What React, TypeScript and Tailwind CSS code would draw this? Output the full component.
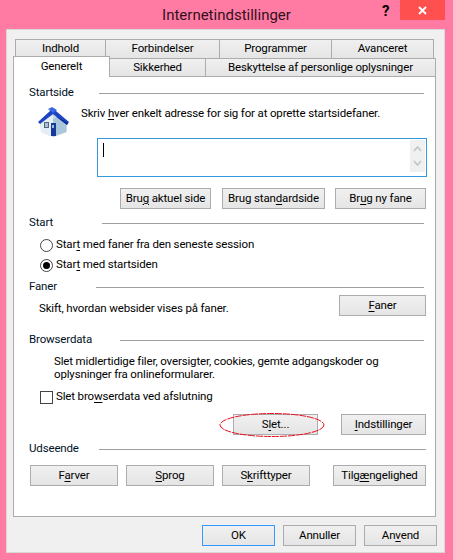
import type { ReactNode } from 'react';

const font = 'font-["Roboto","Open_Sans",sans-serif]';

function Key({ children }: { children: ReactNode }) {
  return <span className="underline underline-offset-2">{children}</span>;
}

function Btn({ className = '', children }: { className?: string; children: ReactNode }) {
  return (
    <div
      className={`h-[21px] flex items-center justify-center border border-[#acacac] bg-gradient-to-b from-[#f0f0f0] to-[#e5e5e5] text-[11.5px] tracking-[-0.15px] leading-none text-black ${className}`}
    >
      <span className="whitespace-pre">{children}</span>
    </div>
  );
}

function Heading({ label, labelClass, className = '' }: { label: string; labelClass: string; className?: string }) {
  return (
    <div className={`flex items-center h-[16px] ${className}`}>
      <span className={`text-[11.5px] tracking-[-0.15px] text-[#00111f] leading-none ${labelClass}`}>{label}</span>
      <div className="flex-1 h-px bg-[#a0a0a0]" />
    </div>
  );
}

function Tab({ className = '', children }: { className?: string; children: ReactNode }) {
  return (
    <div
      className={`flex items-center justify-center border border-[#acacac] border-b-0 bg-gradient-to-b from-[#f0f0f0] to-[#e5e5e5] text-[11.5px] tracking-[-0.15px] leading-none text-black ${className}`}
    >
      {children}
    </div>
  );
}

function HouseIcon() {
  return (
    <svg width="34" height="32" viewBox="0 0 34 32">
      <path d="M4 15 L17 7 L31 19 L31 26 L17 31 L5 26 Z" fill="#c9d9e6" />
      <path d="M17 9 L5 16 L5 26 L17 31 Z" fill="#e4edf4" />
      <path d="M17 31 L30 26 L30 18 L21 11 L17 13 Z" fill="#a9c6da" />
      <path d="M2 16 L14 5 L17 2 L20 5 L33 16 L31 19 L17 8 L4 18 Z" fill="#1c44c4" />
      <path d="M12 3 L16 1 L21 4 L17 7 Z" fill="#3a6ae0" />
      <path d="M16 8 L32 17 L31 19 L18 9 Z" fill="#0e2c96" />
      <rect x="8" y="16" width="5" height="6" fill="#52687a" />
      <rect x="9" y="17" width="3" height="4" fill="#a8c0d2" />
      <rect x="15" y="17" width="5" height="13" fill="#163a9c" />
      <rect x="16" y="19" width="2" height="3" fill="#9fb8d8" />
    </svg>
  );
}

function Radio({ checked }: { checked?: boolean }) {
  return (
    <div className="w-[13px] h-[13px] rounded-full border border-[#444] bg-white flex items-center justify-center">
      {checked && <div className="w-[7px] h-[7px] rounded-full bg-black" />}
    </div>
  );
}

export default function App() {
  return (
    <div className={`w-[453px] h-[560px] bg-[#ff7ba3] overflow-hidden ${font}`}>
      {/* title bar */}
      <div className="h-[29px] relative flex items-center justify-center pt-[1px]">
        <span className="text-[15px] leading-none text-[#33101c]">Internetindstillinger</span>
        <span className="absolute left-[382px] top-0 text-[15px] font-bold text-black">?</span>
        <div className="absolute left-[400px] top-0 w-[45px] h-[20px] bg-[#ff5050] flex items-center justify-center">
          <svg width="9" height="9" viewBox="0 0 9 9">
            <path d="M1 1 L8 8 M8 1 L1 8" stroke="#fff" strokeWidth="1.8" />
          </svg>
        </div>
      </div>

      <div className="ml-[6px] w-[439px] h-[524px] bg-[#f0f0f0] border border-[#d8d8d8] pl-[6px] pt-[9px]">
        {/* tabs */}
        <div className="flex ml-[2px] w-[419px]">
          <Tab className="w-[91px] h-[19px]">Indhold</Tab>
          <Tab className="w-[114px] h-[19px] border-l-0">Forbindelser</Tab>
          <Tab className="w-[112px] h-[19px] border-l-0">Programmer</Tab>
          <Tab className="w-[102px] h-[19px] border-l-0">Avanceret</Tab>
        </div>
        <div className="flex items-end h-[18px]">
          <div className="w-[97px] h-[21px] bg-white border border-[#acacac] border-b-0 relative z-10 -mb-px flex items-center justify-center text-[11.5px] tracking-[-0.15px] leading-none text-black">
            Generelt
          </div>
          <Tab className="w-[96px] border-l-0 h-[18px]">Sikkerhed</Tab>
          <Tab className="w-[230px] border-l-0 h-[18px]">Beskyttelse af personlige oplysninger</Tab>
        </div>

        {/* panel */}
        <div className="w-[423px] h-[441px] bg-white border border-[#acacac] pl-[15px] pr-[9px] pt-[8px] text-[11.5px] tracking-[-0.15px] leading-none text-black">
          <Heading label="Startside" labelClass="w-[70px]" className="mr-[2px]" />
          <div className="flex items-start ml-[7px] h-[37px]">
            <div className="w-[45px] mt-[5px]">
              <HouseIcon />
            </div>
            <div className="mt-[7px]">
              Skriv <Key>h</Key>ver enkelt adresse for sig for at oprette startsidefaner.
            </div>
          </div>

          <div className="ml-[68px] w-[330px] h-[39px] border border-[#3399dd] flex justify-between pl-[5px] pt-[3px]">
            <div className="w-px h-[14px] bg-black mt-[1px]" />
            <div className="w-[17px] h-full -mt-[3px] bg-[#f0f0f0] border-[1px] border-white flex flex-col items-center justify-between py-[6px]">
              <svg width="9" height="6" viewBox="0 0 9 6">
                <path d="M1 5 L4.5 1 L8 5" stroke="#c4c4c4" strokeWidth="1.6" fill="none" />
              </svg>
              <svg width="9" height="6" viewBox="0 0 9 6">
                <path d="M1 1 L4.5 5 L8 1" stroke="#c4c4c4" strokeWidth="1.6" fill="none" />
              </svg>
            </div>
          </div>

          <div className="flex justify-end mt-[11px] gap-[11px]">
            <Btn className="w-[91px]">Bru<Key>g</Key> aktuel side</Btn>
            <Btn className="w-[103px] -mr-px">Brug stan<Key>d</Key>ardside</Btn>
            <Btn className="w-[91px]">Br<Key>u</Key>g ny fane</Btn>
          </div>

          <Heading label="Start" labelClass="w-[73px]" className="mt-[6px] mr-[2px]" />
          <div className="flex items-center gap-[3px] mt-[6px] ml-[11px] h-[16px]">
            <Radio />
            <span>Star<Key>t</Key> med faner fra den seneste session</span>
          </div>
          <div className="flex items-center gap-[3px] mt-[4px] ml-[11px] h-[16px]">
            <Radio checked />
            <span>Star<Key>t</Key> med startsiden</span>
          </div>

          <Heading label="Faner" labelClass="w-[67px]" className="mt-[6px] mr-[2px]" />
          <div className="flex items-start justify-between pl-[10px]">
            <span className="mt-[8px]">Skift, hvordan websider vises på faner.</span>
            <Btn className="w-[87px]"><Key>F</Key>aner</Btn>
          </div>

          <Heading label="Browserdata" labelClass="w-[91px]" className="mt-[16px] mr-[2px]" />
          <div className="ml-[25px] mt-[7px] leading-[13px]">
            Slet midlertidige filer, oversigter, cookies, gemte adgangskoder og
            <br />
            oplysninger fra onlineformularer.
          </div>
          <div className="flex items-center gap-[3px] mt-[8px] ml-[11px] h-[16px]">
            <div className="w-[13px] h-[13px] border border-[#444] bg-white" />
            <span>Slet bro<Key>w</Key>serdata ved afslutning</span>
          </div>

          <div className="flex justify-end mt-[9px] gap-[23px]">
            <div className="relative">
              <Btn className="w-[85px]">S<Key>l</Key>et...</Btn>
              <svg className="absolute -left-[14px] -top-[2px]" width="106" height="26" viewBox="0 0 106 26">
                <ellipse cx="53" cy="13" rx="52" ry="11.5" fill="none" stroke="#e8101c" strokeWidth="1" strokeDasharray="7 1" />
              </svg>
            </div>
            <Btn className="w-[85px]"><Key>I</Key>ndstillinger</Btn>
          </div>

          <Heading label="Udseende" labelClass="w-[70px]" className="mt-[6px]" />
          <div className="flex mt-[8px] ml-[1px]">
            <Btn className="w-[88px]">F<Key>a</Key>rver</Btn>
            <Btn className="w-[88px] ml-[8px]"><Key>S</Key>prog</Btn>
            <Btn className="w-[88px] ml-[8px]">S<Key>k</Key>rifttyper</Btn>
            <Btn className="w-[93px] ml-[23px]">Tilg<Key>æ</Key>ngelighed</Btn>
          </div>
        </div>

        {/* footer */}
        <div className="flex justify-end gap-[8px] mt-[8px] w-[424px]">
          <Btn className="w-[73px] !border-[#3399ff]">OK</Btn>
          <Btn className="w-[73px]">Annuller</Btn>
          <Btn className="w-[73px]">An<Key>v</Key>end</Btn>
        </div>
      </div>
    </div>
  );
}
